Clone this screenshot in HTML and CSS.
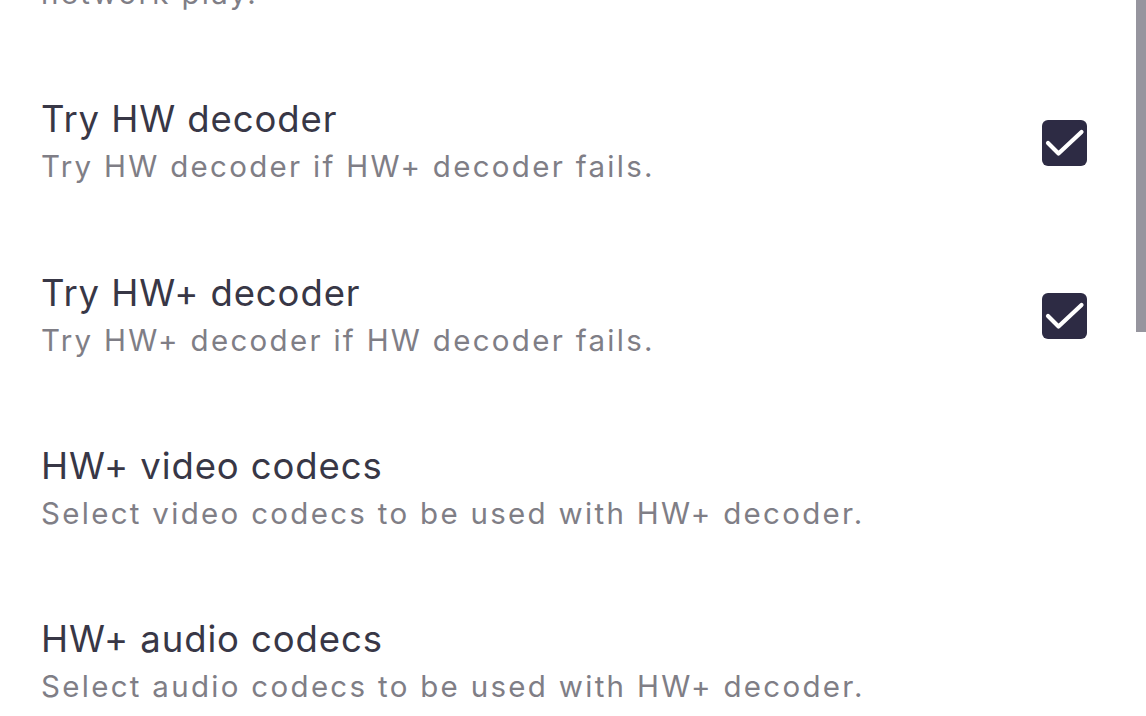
FILE: index.html
```html
<!DOCTYPE html>
<html>
<head>
<meta charset="utf-8">
<link rel="stylesheet" href="styles.css">
</head>
<body>
<div class="screen">
  <div class="list">
    <div class="row">
      <div class="text">
        <div class="title">HW decoder (network)</div>
        <div class="summary">Use HW decoder for<br>network play.</div>
      </div>
    </div>
    <div class="row">
      <div class="text">
        <div class="title">Try HW decoder</div>
        <div class="summary">Try HW decoder if HW+ decoder fails.</div>
      </div>
      <div class="check"><svg viewBox="0 0 45 46" width="45" height="46"><path d="M6 23 L16.5 33.5 L39.5 12" fill="none" stroke="#fff" stroke-width="4.2" stroke-linecap="round" stroke-linejoin="round"/></svg></div>
    </div>
    <div class="row">
      <div class="text">
        <div class="title">Try HW+ decoder</div>
        <div class="summary">Try HW+ decoder if HW decoder fails.</div>
      </div>
      <div class="check"><svg viewBox="0 0 45 46" width="45" height="46"><path d="M6 23 L16.5 33.5 L39.5 12" fill="none" stroke="#fff" stroke-width="4.2" stroke-linecap="round" stroke-linejoin="round"/></svg></div>
    </div>
    <div class="row">
      <div class="text">
        <div class="title">HW+ video codecs</div>
        <div class="summary">Select video codecs to be used with HW+ decoder.</div>
      </div>
    </div>
    <div class="row">
      <div class="text">
        <div class="title">HW+ audio codecs</div>
        <div class="summary">Select audio codecs to be used with HW+ decoder.</div>
      </div>
    </div>
  </div>
  <div class="scrollbar"></div>
</div>
</body>
</html>
```

FILE: styles.css
```css
html, body {
  margin: 0;
  padding: 0;
  background: #ffffff;
}
.screen {
  position: relative;
  width: 1146px;
  height: 716px;
  overflow: hidden;
  font-family: Inter, "Open Sans", sans-serif;
}
.list {
  margin-top: -161px;
}
.row {
  display: flex;
  align-items: center;
  padding: 41.17px 59px 41.17px 41px;
}
.text {
  flex: 1;
  min-width: 0;
}
.title {
  font-size: 36.5px;
  line-height: 44px;
  letter-spacing: 0.9px;
  color: #383746;
}
.summary {
  margin-top: 3px;
  font-size: 29.5px;
  line-height: 44px;
  letter-spacing: 2.3px;
  color: #7f7e86;
}
.check {
  width: 45px;
  height: 46px;
  border-radius: 6px;
  background: #2d2b44;
  flex: none;
}
.check svg {
  display: block;
}
.scrollbar {
  position: absolute;
  top: 0;
  right: 0;
  width: 10px;
  height: 332px;
  background: #96959e;
}
```
